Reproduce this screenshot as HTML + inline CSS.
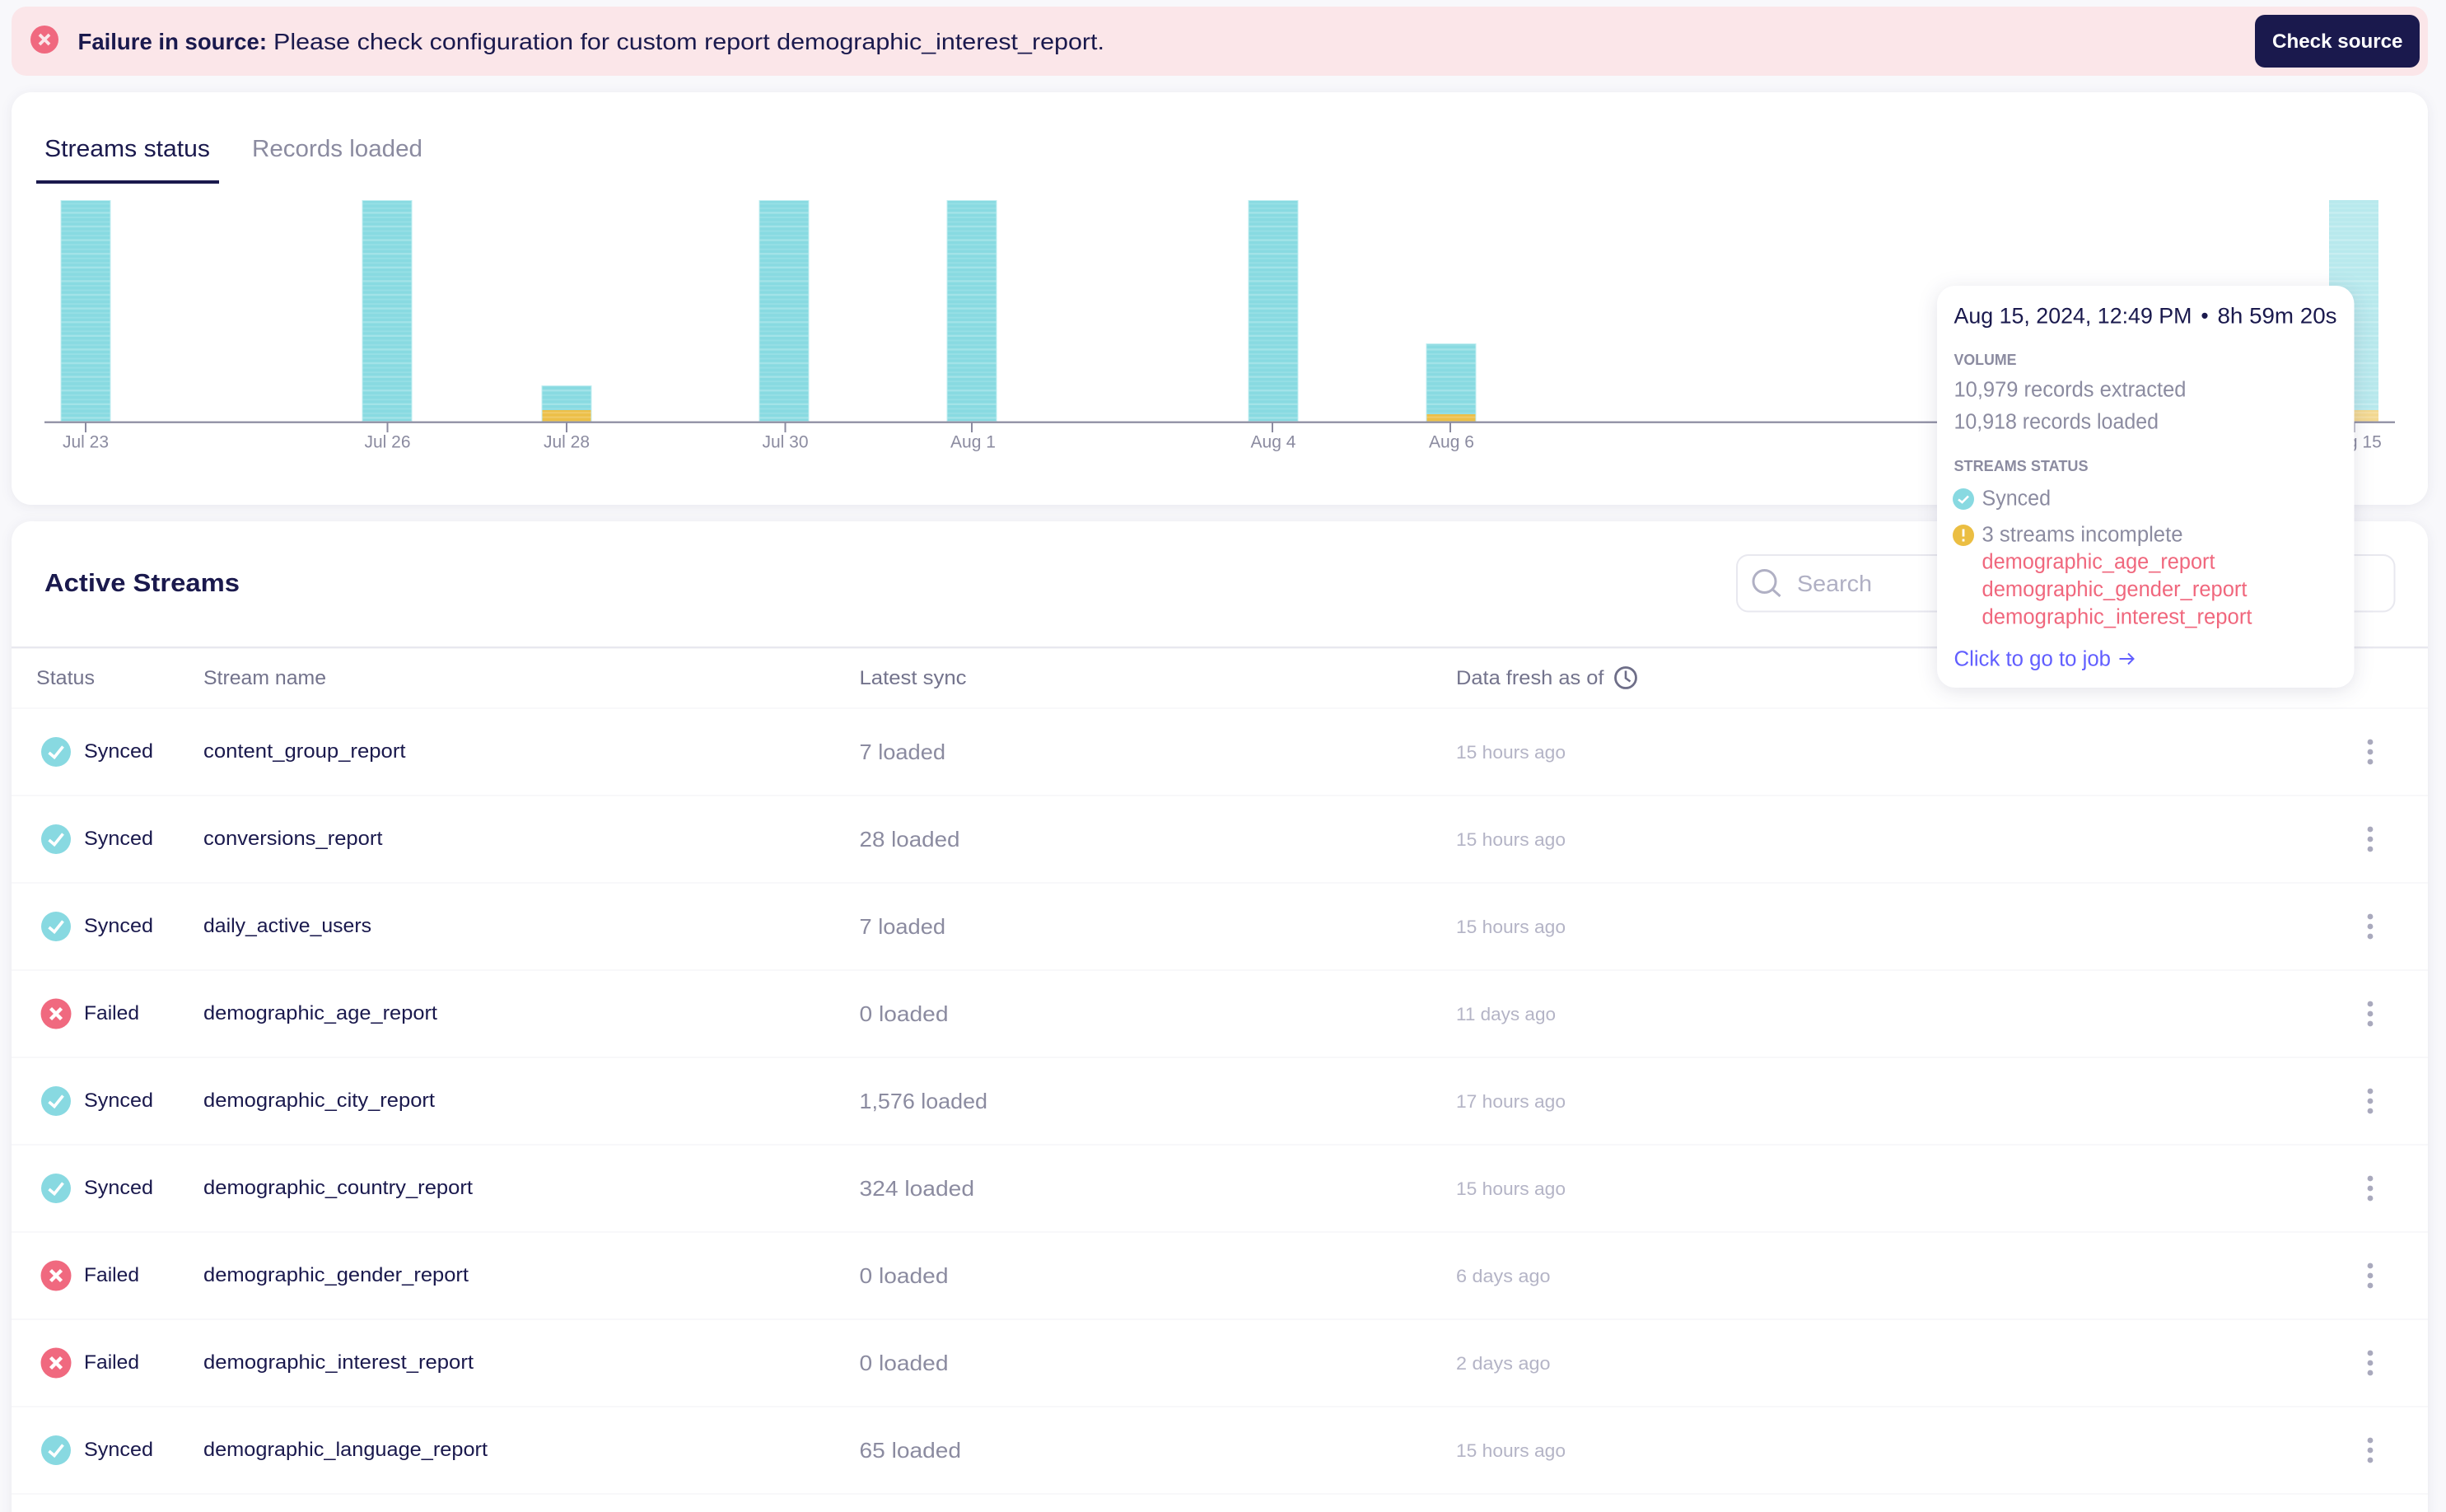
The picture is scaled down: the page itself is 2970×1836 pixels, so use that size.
<!DOCTYPE html>
<html lang="en">
<head>
<meta charset="utf-8">
<title>Streams status</title>
<style>
html,body{margin:0;padding:0;background:#f8f8fb;width:2970px;height:1836px;overflow:hidden}
svg{display:block}
text{font-family:"Liberation Sans",Arial,sans-serif;fill:#1a194d;white-space:pre}
.b{font-weight:700}
.n{font-size:24.5px}
.h{font-size:24.5px;fill:#73738c}
.l{font-size:26px;fill:#8b8ba0}
.f{font-size:22.5px;fill:#b4b4c6}
.x{font-size:21px;fill:#8b8ba0;text-anchor:middle}
.t{font-size:25.5px;fill:#8b8ba0}
.r{font-size:25.5px;fill:#f0677d}
.c{font-size:18.5px;fill:#8b8ba0;font-weight:700}
.tick{stroke:#8b8ba0;stroke-width:2}
.sh{filter:drop-shadow(0 2px 7px rgba(26,25,77,.07))}
.tp{filter:drop-shadow(0 4px 12px rgba(26,25,77,.12))}
.rl{stroke:#f8f8fa;stroke-width:2}
</style>
</head>
<body>
<svg xmlns="http://www.w3.org/2000/svg" width="2970" height="1836" viewBox="0 0 2970 1836">
<defs>
<pattern id="pb" width="8" height="16.6" patternUnits="userSpaceOnUse" patternTransform="translate(0 243)"><rect width="8" height="16.6" fill="#88dae1"/><rect y="3.4" width="8" height="2" fill="#96dfe5"/><rect y="8.9" width="8" height="2" fill="#96dfe5"/><rect y="14.2" width="8" height="2.4" fill="#a3e3e8"/></pattern>
<pattern id="py" width="8" height="5.4" patternUnits="userSpaceOnUse"><rect width="8" height="5.4" fill="#ecbf47"/><rect y="3.4" width="8" height="2" fill="#f0ca68"/></pattern>
<symbol id="ok" viewBox="-18 -18 36 36" overflow="visible"><circle r="18" fill="#88d9e1"/><path d="M-8.5 1L-2 6.5L8.5-6.5" fill="none" stroke="#fff" stroke-width="3.6"/></symbol>
<symbol id="no" viewBox="-18 -18 36 36" overflow="visible"><circle r="18.5" fill="#f0697f"/><path d="M-6.5-6.5L6.5 6.5M6.5-6.5L-6.5 6.5" fill="none" stroke="#fff" stroke-width="4.4"/></symbol>
<symbol id="dots" viewBox="-5 -18 10 36" overflow="visible"><circle cy="-12" r="3.4" fill="#a9a9bd"/><circle cy="0" r="3.4" fill="#a9a9bd"/><circle cy="12" r="3.4" fill="#a9a9bd"/></symbol>
</defs>

<rect width="2970" height="1836" fill="#f8f8fb"/>

<!-- Banner -->
<rect x="14" y="8" width="2934" height="84" rx="18" fill="#fbe6e9"/>
<circle cx="54" cy="48" r="17" fill="#f0697f"/>
<path d="M48 42L60 54M60 42L48 54" fill="none" stroke="#fbe6e9" stroke-width="3.8"/>
<text class="b" x="94.5" y="60" font-size="28" textLength="229.5" lengthAdjust="spacingAndGlyphs">Failure in source:</text>
<text x="332" y="60" font-size="28" textLength="1009" lengthAdjust="spacingAndGlyphs">Please check configuration for custom report demographic_interest_report.</text>
<rect x="2738" y="18" width="200" height="64" rx="12" fill="#1a194d"/>
<text class="b" x="2759" y="58" font-size="24.5" style="fill:#fff" textLength="158.5" lengthAdjust="spacingAndGlyphs">Check source</text>

<!-- Chart card -->
<rect class="sh" x="14" y="112" width="2934" height="501" rx="24" fill="#fff"/>
<text x="54" y="190" font-size="28.5" textLength="201" lengthAdjust="spacingAndGlyphs">Streams status</text>
<text x="306" y="190" font-size="28.5" style="fill:#8b8ba0" textLength="207" lengthAdjust="spacingAndGlyphs">Records loaded</text>
<rect x="44" y="219" width="222" height="4" fill="#1a194d"/>

<g stroke="#c0edf0" stroke-width="1">
<rect x="74" y="243.5" width="60" height="268" fill="url(#pb)"/>
<rect x="440" y="243.5" width="60" height="268" fill="url(#pb)"/>
<rect x="658" y="468.5" width="60" height="43" fill="url(#pb)"/>
<rect x="922" y="243.5" width="60" height="268" fill="url(#pb)"/>
<rect x="1150" y="243.5" width="60" height="268" fill="url(#pb)"/>
<rect x="1516" y="243.5" width="60" height="268" fill="url(#pb)"/>
<rect x="1732" y="417.5" width="60" height="94" fill="url(#pb)"/>
</g>
<rect x="658.5" y="498" width="59" height="13.5" fill="url(#py)"/>
<rect x="1732.5" y="503" width="59" height="8.5" fill="url(#py)"/>
<g opacity=".6">
<rect x="2828" y="243" width="60" height="268" fill="url(#pb)"/>
<rect x="2828" y="498" width="60" height="13.5" fill="url(#py)"/>
</g>

<rect x="54" y="511.6" width="2854" height="2.2" fill="#8b8ba0"/>
<path class="tick" d="M104 513V525M470.5 513V525M688 513V525M953.5 513V525M1180 513V525M1545 513V525M1761 513V525M2858.5 513V525"/>
<text class="x" x="104" y="543.5">Jul 23</text>
<text class="x" x="470.5" y="543.5">Jul 26</text>
<text class="x" x="688" y="543.5">Jul 28</text>
<text class="x" x="953.5" y="543.5">Jul 30</text>
<text class="x" x="1181.5" y="543.5">Aug 1</text>
<text class="x" x="1546" y="543.5">Aug 4</text>
<text class="x" x="1762.5" y="543.5">Aug 6</text>
<text class="x" x="2858.5" y="543.5">Aug 15</text>

<!-- Streams card -->
<rect class="sh" x="14" y="633" width="2934" height="1260" rx="24" fill="#fff"/>
<text class="b" x="54" y="718" font-size="31" textLength="237" lengthAdjust="spacingAndGlyphs">Active Streams</text>

<rect x="2109" y="674" width="798.5" height="68.5" rx="14" fill="#fff" stroke="#e8e8ef" stroke-width="2"/>
<circle cx="2142.5" cy="706" r="13.5" fill="none" stroke="#b0b0c4" stroke-width="3"/>
<path d="M2152 715.5L2161.5 724" fill="none" stroke="#b0b0c4" stroke-width="3"/>
<text x="2182" y="718" font-size="28" style="fill:#b0b0c4" textLength="91" lengthAdjust="spacingAndGlyphs">Search</text>

<rect x="14" y="785" width="2934" height="2.4" fill="#e8e8ef"/>
<text class="h" x="44" y="831" textLength="71" lengthAdjust="spacingAndGlyphs">Status</text>
<text class="h" x="247" y="831" textLength="149" lengthAdjust="spacingAndGlyphs">Stream name</text>
<text class="h" x="1043.5" y="831" textLength="130" lengthAdjust="spacingAndGlyphs">Latest sync</text>
<text class="h" x="1768" y="831" textLength="179.5" lengthAdjust="spacingAndGlyphs">Data fresh as of</text>
<circle cx="1974" cy="823" r="12.5" fill="none" stroke="#6e6e88" stroke-width="2.8"/>
<path d="M1974 814.5V823.5L1979.5 827.5" fill="none" stroke="#6e6e88" stroke-width="2.6"/>

<path class="rl" d="M14 860H2948M14 966H2948M14 1072H2948M14 1178H2948M14 1284H2948M14 1390H2948M14 1496H2948M14 1602H2948M14 1708H2948M14 1814H2948"/>

<!-- Rows -->
<use href="#ok" x="50" y="895" width="36" height="36"/>
<text class="n" x="102" y="920" textLength="84" lengthAdjust="spacingAndGlyphs">Synced</text>
<text class="n" x="247" y="920" textLength="245.5" lengthAdjust="spacingAndGlyphs">content_group_report</text>
<text class="l" x="1043.5" y="922" textLength="104.5" lengthAdjust="spacingAndGlyphs">7 loaded</text>
<text class="f" x="1768" y="921" textLength="133" lengthAdjust="spacingAndGlyphs">15 hours ago</text>
<use href="#dots" x="2873" y="895" width="10" height="36"/>

<use href="#ok" x="50" y="1001" width="36" height="36"/>
<text class="n" x="102" y="1026" textLength="84" lengthAdjust="spacingAndGlyphs">Synced</text>
<text class="n" x="247" y="1026" textLength="217.5" lengthAdjust="spacingAndGlyphs">conversions_report</text>
<text class="l" x="1043.5" y="1028" textLength="122" lengthAdjust="spacingAndGlyphs">28 loaded</text>
<text class="f" x="1768" y="1027" textLength="133" lengthAdjust="spacingAndGlyphs">15 hours ago</text>
<use href="#dots" x="2873" y="1001" width="10" height="36"/>

<use href="#ok" x="50" y="1107" width="36" height="36"/>
<text class="n" x="102" y="1132" textLength="84" lengthAdjust="spacingAndGlyphs">Synced</text>
<text class="n" x="247" y="1132" textLength="204" lengthAdjust="spacingAndGlyphs">daily_active_users</text>
<text class="l" x="1043.5" y="1134" textLength="104.5" lengthAdjust="spacingAndGlyphs">7 loaded</text>
<text class="f" x="1768" y="1133" textLength="133" lengthAdjust="spacingAndGlyphs">15 hours ago</text>
<use href="#dots" x="2873" y="1107" width="10" height="36"/>

<use href="#no" x="50" y="1213" width="36" height="36"/>
<text class="n" x="102" y="1238" textLength="67" lengthAdjust="spacingAndGlyphs">Failed</text>
<text class="n" x="247" y="1238" textLength="284" lengthAdjust="spacingAndGlyphs">demographic_age_report</text>
<text class="l" x="1043.5" y="1240" textLength="108" lengthAdjust="spacingAndGlyphs">0 loaded</text>
<text class="f" x="1768" y="1239" textLength="121" lengthAdjust="spacingAndGlyphs">11 days ago</text>
<use href="#dots" x="2873" y="1213" width="10" height="36"/>

<use href="#ok" x="50" y="1319" width="36" height="36"/>
<text class="n" x="102" y="1344" textLength="84" lengthAdjust="spacingAndGlyphs">Synced</text>
<text class="n" x="247" y="1344" textLength="281" lengthAdjust="spacingAndGlyphs">demographic_city_report</text>
<text class="l" x="1043.5" y="1346" textLength="155.5" lengthAdjust="spacingAndGlyphs">1,576 loaded</text>
<text class="f" x="1768" y="1345" textLength="133" lengthAdjust="spacingAndGlyphs">17 hours ago</text>
<use href="#dots" x="2873" y="1319" width="10" height="36"/>

<use href="#ok" x="50" y="1425" width="36" height="36"/>
<text class="n" x="102" y="1450" textLength="84" lengthAdjust="spacingAndGlyphs">Synced</text>
<text class="n" x="247" y="1450" textLength="327" lengthAdjust="spacingAndGlyphs">demographic_country_report</text>
<text class="l" x="1043.5" y="1452" textLength="139.5" lengthAdjust="spacingAndGlyphs">324 loaded</text>
<text class="f" x="1768" y="1451" textLength="133" lengthAdjust="spacingAndGlyphs">15 hours ago</text>
<use href="#dots" x="2873" y="1425" width="10" height="36"/>

<use href="#no" x="50" y="1531" width="36" height="36"/>
<text class="n" x="102" y="1556" textLength="67" lengthAdjust="spacingAndGlyphs">Failed</text>
<text class="n" x="247" y="1556" textLength="322" lengthAdjust="spacingAndGlyphs">demographic_gender_report</text>
<text class="l" x="1043.5" y="1558" textLength="108" lengthAdjust="spacingAndGlyphs">0 loaded</text>
<text class="f" x="1768" y="1557" textLength="114.5" lengthAdjust="spacingAndGlyphs">6 days ago</text>
<use href="#dots" x="2873" y="1531" width="10" height="36"/>

<use href="#no" x="50" y="1637" width="36" height="36"/>
<text class="n" x="102" y="1662" textLength="67" lengthAdjust="spacingAndGlyphs">Failed</text>
<text class="n" x="247" y="1662" textLength="328" lengthAdjust="spacingAndGlyphs">demographic_interest_report</text>
<text class="l" x="1043.5" y="1664" textLength="108" lengthAdjust="spacingAndGlyphs">0 loaded</text>
<text class="f" x="1768" y="1663" textLength="114.5" lengthAdjust="spacingAndGlyphs">2 days ago</text>
<use href="#dots" x="2873" y="1637" width="10" height="36"/>

<use href="#ok" x="50" y="1743" width="36" height="36"/>
<text class="n" x="102" y="1768" textLength="84" lengthAdjust="spacingAndGlyphs">Synced</text>
<text class="n" x="247" y="1768" textLength="345" lengthAdjust="spacingAndGlyphs">demographic_language_report</text>
<text class="l" x="1043.5" y="1770" textLength="123.5" lengthAdjust="spacingAndGlyphs">65 loaded</text>
<text class="f" x="1768" y="1769" textLength="133" lengthAdjust="spacingAndGlyphs">15 hours ago</text>
<use href="#dots" x="2873" y="1743" width="10" height="36"/>

<!-- Tooltip -->
<rect class="tp" x="2352" y="347" width="506.5" height="488" rx="22" fill="#fff"/>
<text x="2372.5" y="392.5" font-size="26.5" textLength="289" lengthAdjust="spacingAndGlyphs">Aug 15, 2024, 12:49 PM</text>
<text x="2677" y="392.5" font-size="26.5" text-anchor="middle">•</text>
<text x="2692.5" y="392.5" font-size="26.5" textLength="145" lengthAdjust="spacingAndGlyphs">8h 59m 20s</text>
<text class="c" x="2372.5" y="443" textLength="76" lengthAdjust="spacingAndGlyphs">VOLUME</text>
<text class="t" x="2372.5" y="481.5" textLength="282" lengthAdjust="spacingAndGlyphs">10,979 records extracted</text>
<text class="t" x="2372.5" y="520.5" textLength="248.5" lengthAdjust="spacingAndGlyphs">10,918 records loaded</text>
<text class="c" x="2372.5" y="572" textLength="163" lengthAdjust="spacingAndGlyphs">STREAMS STATUS</text>
<circle cx="2384" cy="606" r="13" fill="#88d9e1"/>
<path d="M2378 606.5L2382.5 610L2390 602.5" fill="none" stroke="#fff" stroke-width="2.6"/>
<text class="t" x="2406.5" y="613.5" textLength="83.5" lengthAdjust="spacingAndGlyphs">Synced</text>
<circle cx="2384" cy="650" r="13" fill="#ebbe42"/>
<path d="M2384 642.5V651.5M2384 654.5V657.5" fill="none" stroke="#fff" stroke-width="2.8"/>
<text class="t" x="2406.5" y="657.5" textLength="244" lengthAdjust="spacingAndGlyphs">3 streams incomplete</text>
<text class="r" x="2406.5" y="690.5" textLength="283" lengthAdjust="spacingAndGlyphs">demographic_age_report</text>
<text class="r" x="2406.5" y="724" textLength="322" lengthAdjust="spacingAndGlyphs">demographic_gender_report</text>
<text class="r" x="2406.5" y="757.5" textLength="328" lengthAdjust="spacingAndGlyphs">demographic_interest_report</text>
<text x="2372.5" y="808.5" font-size="25.5" style="fill:#615eff" textLength="190.5" lengthAdjust="spacingAndGlyphs">Click to go to job</text>
<path d="M2573.5 800H2590.5M2584 793.5L2590.5 800L2584 806.5" fill="none" stroke="#615eff" stroke-width="2"/>
</svg>
</body>
</html>
